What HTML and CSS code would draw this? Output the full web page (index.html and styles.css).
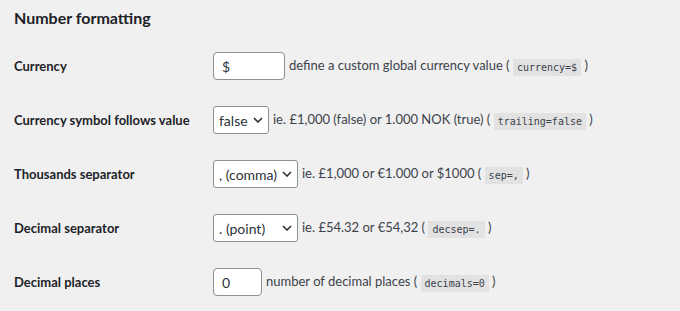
FILE: index.html
```html
<!DOCTYPE html>
<html lang="en">
<head>
    <meta charset="UTF-8">
    <title>Number formatting</title>
    <link rel="stylesheet" href="styles.css">
</head>
<body>
    <h2 class="title">Number formatting</h2>

    <div class="form-table">
        <div class="row">
            <label class="label" for="currency">Currency</label>
            <div class="field">
                <input type="text" id="currency" class="text-input w-currency" value="$">
                <span class="desc">define a custom global currency value ( <code>currency=$</code> )</span>
            </div>
        </div>

        <div class="row">
            <label class="label" for="trailing">Currency symbol follows value</label>
            <div class="field">
                <span class="select-wrap w-trailing">
                    <select id="trailing">
                        <option>false</option>
                        <option>true</option>
                    </select>
                    <svg class="chevron" width="10" height="6" viewBox="0 0 10 6"><path d="M1 1l4 4 4-4" fill="none" stroke="#2c3338" stroke-width="1.6"/></svg>
                </span>
                <span class="desc">ie. £1,000 (false) or 1.000 NOK (true) ( <code>trailing=false</code> )</span>
            </div>
        </div>

        <div class="row">
            <label class="label" for="sep">Thousands separator</label>
            <div class="field">
                <span class="select-wrap w-sep">
                    <select id="sep">
                        <option>, (comma)</option>
                        <option>. (point)</option>
                    </select>
                    <svg class="chevron" width="10" height="6" viewBox="0 0 10 6"><path d="M1 1l4 4 4-4" fill="none" stroke="#2c3338" stroke-width="1.6"/></svg>
                </span>
                <span class="desc">ie. £1,000 or €1.000 or $1000 ( <code>sep=,</code> )</span>
            </div>
        </div>

        <div class="row">
            <label class="label" for="decsep">Decimal separator</label>
            <div class="field">
                <span class="select-wrap w-sep">
                    <select id="decsep">
                        <option>. (point)</option>
                        <option>, (comma)</option>
                    </select>
                    <svg class="chevron" width="10" height="6" viewBox="0 0 10 6"><path d="M1 1l4 4 4-4" fill="none" stroke="#2c3338" stroke-width="1.6"/></svg>
                </span>
                <span class="desc">ie. £54.32 or €54,32 ( <code>decsep=.</code> )</span>
            </div>
        </div>

        <div class="row">
            <label class="label" for="decimals">Decimal places</label>
            <div class="field">
                <input type="text" id="decimals" class="text-input w-decimals" value="0">
                <span class="desc">number of decimal places ( <code>decimals=0</code> )</span>
            </div>
        </div>
    </div>
</body>
</html>
```

FILE: styles.css
```css
body {
    font-family: Lato, "Noto Sans", sans-serif;
    background-color: #f0f0f1;
    color: #3c434a;
    margin: 0;
    padding: 0 14px;
}

.title {
    font-size: 16px;
    font-weight: 700;
    color: #1d2327;
    margin: 0;
    padding-top: 7px;
    line-height: 22px;
    height: 32px;
}

.row {
    display: flex;
    align-items: center;
    height: 54px;
}

.label {
    width: 199px;
    flex-shrink: 0;
    font-size: 13px;
    font-weight: 700;
    color: #1d2327;
}

.field {
    display: flex;
    align-items: center;
    gap: 4px;
    font-size: 13px;
}

.text-input {
    box-sizing: border-box;
    height: 28px;
    padding: 0 8px;
    border: 1px solid #8c8f94;
    border-radius: 4px;
    background-color: #ffffff;
    font-family: inherit;
    font-size: 14px;
    color: #2c3338;
}

.w-currency {
    width: 72px;
}

.w-decimals {
    width: 49px;
}

.select-wrap {
    position: relative;
    display: inline-block;
}

.select-wrap select {
    appearance: none;
    -webkit-appearance: none;
    box-sizing: border-box;
    width: 100%;
    height: 28px;
    padding: 0 18px 0 5px;
    border: 1px solid #8c8f94;
    border-radius: 3px;
    background-color: #ffffff;
    font-family: inherit;
    font-size: 14px;
    color: #2c3338;
}

.w-trailing {
    width: 56px;
}

.w-sep {
    width: 85px;
}

.chevron {
    position: absolute;
    right: 6px;
    top: 11px;
    pointer-events: none;
}

.desc {
    line-height: 20px;
}

code {
    font-family: "DejaVu Sans Mono", monospace;
    font-size: 10px;
    background-color: #e2e2e3;
    padding: 3px 4px;
    vertical-align: -1px;
}
```
